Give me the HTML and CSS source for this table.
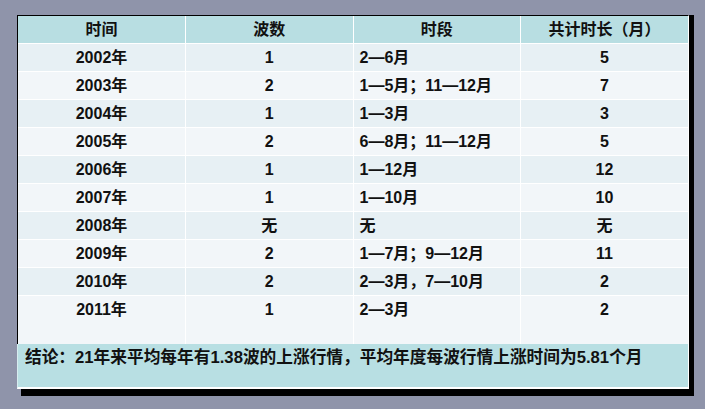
FILE: index.html
```html
<!DOCTYPE html>
<html lang="zh">
<head>
<meta charset="utf-8">
<link rel="stylesheet" href="styles.css">
</head>
<body>
<div class="frame">
<div class="panel">
  <table class="grid">
    <thead>
      <tr><th>时间</th><th>波数</th><th>时段</th><th>共计时长（月）</th></tr>
    </thead>
    <tbody>
      <tr class="odd"><td>2002年</td><td>1</td><td class="period">2—6月</td><td>5</td></tr>
      <tr class="even"><td>2003年</td><td>2</td><td class="period">1—5月；11—12月</td><td>7</td></tr>
      <tr class="odd"><td>2004年</td><td>1</td><td class="period">1—3月</td><td>3</td></tr>
      <tr class="even"><td>2005年</td><td>2</td><td class="period">6—8月；11—12月</td><td>5</td></tr>
      <tr class="odd"><td>2006年</td><td>1</td><td class="period">1—12月</td><td>12</td></tr>
      <tr class="even"><td>2007年</td><td>1</td><td class="period">1—10月</td><td>10</td></tr>
      <tr class="odd"><td>2008年</td><td>无</td><td class="period">无</td><td>无</td></tr>
      <tr class="even"><td>2009年</td><td>2</td><td class="period">1—7月；9—12月</td><td>11</td></tr>
      <tr class="odd"><td>2010年</td><td>2</td><td class="period">2—3月，7—10月</td><td>2</td></tr>
      <tr class="even last"><td>2011年</td><td>1</td><td class="period">2—3月</td><td>2</td></tr>
    </tbody>
  </table>
  <div class="conclusion">结论：21年来平均每年有1.38波的上涨行情，平均年度每波行情上涨时间为5.81个月</div>
</div>
</div>
</body>
</html>
```

FILE: styles.css
```css
html, body {
  margin: 0;
  padding: 0;
}
body {
  background: #8f94aa;
  font-family: "Liberation Sans", "Noto Sans CJK SC", sans-serif;
  font-weight: 700;
  color: #111;
}
.frame {
  margin: 17px 0 0 21px;
  width: 673px;
  padding-bottom: 7px;
  background: #000;
}
.panel {
  margin: -2px 0 0 -4px;
  width: 670px;
  border-top: 1px solid #000;
  border-left: 1px solid #000;
  border-right: 1px solid #fff;
  background: #f1f6f9;
}
.grid {
  width: 670px;
  border-collapse: collapse;
  table-layout: fixed;
}
.grid th, .grid td {
  padding: 0;
  height: 27px;
  line-height: 27px;
  font-size: 16px;
  font-weight: 700;
  text-align: center;
  border-right: 1px solid #fff;
  border-bottom: 1px solid #fff;
  white-space: nowrap;
  vertical-align: top;
}
.grid th:last-child, .grid td:last-child {
  border-right: none;
}
.grid th {
  background: #b8dee2;
}
.grid td.period {
  text-align: left;
  padding-left: 6px;
}
.odd td {
  background: #e7f0f4;
}
.even td {
  background: #f2f6f9;
}
.last td {
  height: 48px;
  border-bottom: none;
}
.conclusion {
  margin-left: -1px;
  height: 39px;
  padding: 4px 0 0 7px;
  border-left: 1px solid #d6ecef;
  border-bottom: 2px solid #fff;
  background: #b8dfe3;
  font-size: 16.7px;
  line-height: 20px;
  white-space: nowrap;
}
```
